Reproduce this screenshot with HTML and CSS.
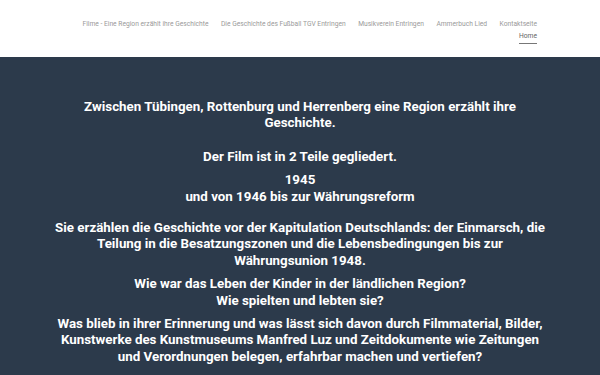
FILE: index.html
```html
<!DOCTYPE html>
<html lang="de">
<head>
<meta charset="utf-8">
<link rel="stylesheet" href="styles.css">
</head>
<body>
<header class="header">
  <nav class="nav">
    <ul class="nav-row">
      <li><a href="#">Filme - Eine Region erzählt ihre Geschichte</a></li>
      <li><a href="#">Die Geschichte des Fußball TGV Entringen</a></li>
      <li><a href="#">Musikverein Entringen</a></li>
      <li><a href="#">Ammerbuch Lied</a></li>
      <li><a href="#">Kontaktseite</a></li>
    </ul>
    <ul class="nav-row nav-row2">
      <li><a href="#" class="active">Home</a></li>
    </ul>
  </nav>
</header>
<main class="main">
  <p class="p1">Zwischen Tübingen, Rottenburg und Herrenberg eine Region erzählt ihre Geschichte.</p>
  <p class="p2">Der Film ist in 2 Teile gegliedert.</p>
  <p class="p3">1945<br>und von 1946 bis zur Währungsreform</p>
  <p class="p4">Sie erzählen die Geschichte vor der Kapitulation Deutschlands: der Einmarsch, die Teilung in die Besatzungszonen und die Lebensbedingungen bis zur Währungsunion 1948.</p>
  <p class="p5">Wie war das Leben der Kinder in der ländlichen Region?<br>Wie spielten und lebten sie?</p>
  <p class="p6">Was blieb in ihrer Erinnerung und was lässt sich davon durch Filmmaterial, Bilder, Kunstwerke des Kunstmuseums Manfred Luz und Zeitdokumente wie Zeitungen und Verordnungen belegen, erfahrbar machen und vertiefen?</p>
</main>
</body>
</html>
```
FILE: styles.css
```css
* { box-sizing: border-box; }
html, body { margin: 0; padding: 0; }
body {
  font-family: Roboto, "Liberation Sans", sans-serif;
  background: #2c3a4b;
  height: 375px;
  overflow: hidden;
}
.header {
  background: #fff;
  height: 57px;
  padding: 20px 63px 0 0;
}
.nav { display: flex; flex-direction: column; align-items: flex-end; }
.nav-row {
  list-style: none;
  margin: 0;
  padding: 0;
  display: flex;
  gap: 12.5px;
}
.nav-row2 { margin-top: 3px; }
.nav-row a {
  font-size: 6.7px;
  color: #9a9a9a;
  text-decoration: none;
  line-height: 9px;
  display: block;
}
.nav-row a.active {
  color: #666;
  border-bottom: 1px solid #777;
  padding-bottom: 2px;
}
.main {
  width: 496px;
  margin: 0 auto;
  padding-top: 41.5px;
  color: #fff;
  text-align: center;
  font-weight: 700;
  font-size: 13.33px;
  line-height: 16.67px;
}
.main p { margin: 0 0 6.3px; }
.main .p1 { margin-bottom: 17.3px; }
.main .p3 { margin-bottom: 14.3px; }
```
